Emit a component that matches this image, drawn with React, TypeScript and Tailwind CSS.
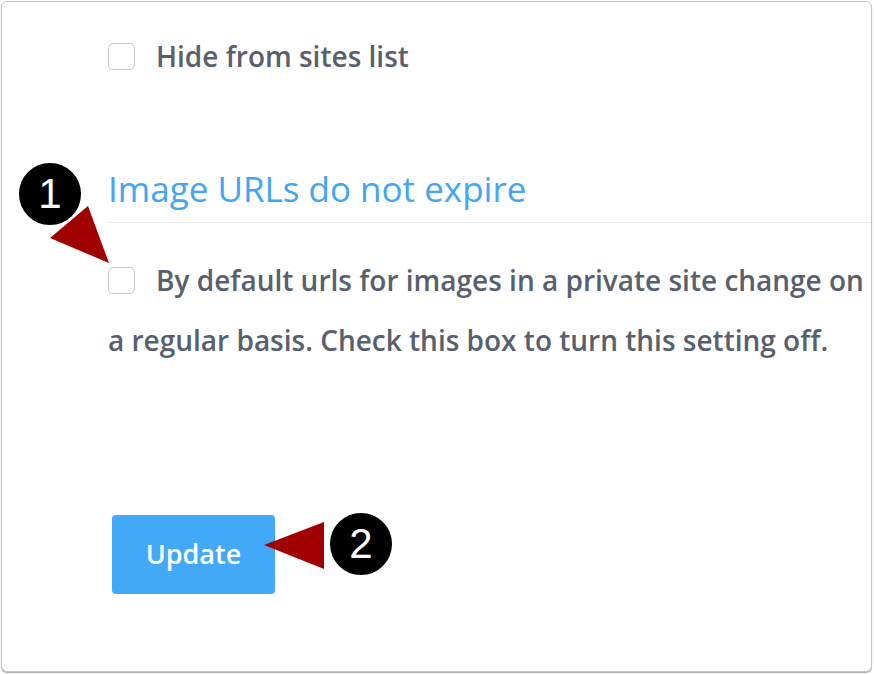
import React from 'react';

const textFont = { fontFamily: '"Open Sans", "Liberation Sans", sans-serif' };

function Box() {
    return (
        <span className="inline-block align-middle w-[27px] h-[27px] rounded-[5px] border border-[#c9c9c9] bg-white mr-[21px] relative -top-[3px]"></span>
    );
}

// numbered callout: black disc with white ring
function Callout({ n, className }: { n: string; className: string }) {
    return (
        <div
            className={`absolute w-[66px] h-[66px] rounded-full bg-black border-[2px] border-white flex items-center justify-center text-white text-[42px] leading-none ${className}`}
            style={{ fontFamily: '"Liberation Sans", Arial, sans-serif' }}
        >
            {n}
        </div>
    );
}

export default function App() {
    return (
        <div className="w-[874px] h-[674px] bg-white pt-px pl-px overflow-hidden">
            <div
                className="relative w-[871px] h-[671px] bg-white border border-[#c4c4c4] rounded-[6px] shadow-[0_1px_1px_rgba(0,0,0,0.35)]"
                style={textFont}
            >
                <div className="pl-[106px] flex flex-col items-start">
                    {/* Hide option */}
                    <div className="mt-[40px] flex items-center gap-[21px] h-[28px]">
                        <span className="inline-block w-[27px] h-[27px] rounded-[5px] border border-[#c9c9c9] bg-white"></span>
                        <span className="text-[28px] font-semibold text-[#59606d]">Hide from sites list</span>
                    </div>

                    {/* Image URLs section */}
                    <h2 className="self-stretch mt-[98px] pb-[12px] border-b border-[#ececec] text-[35px] leading-[42px] font-normal text-[#42a5f5]">
                        Image URLs do not expire
                    </h2>
                    <p className="mt-[27px] text-[28px] leading-[60px] font-semibold text-[#59606d] whitespace-nowrap">
                        <Box />
                        By default urls for images in a private site change on
                        <br />
                        a regular basis. Check this box to turn this setting off.
                    </p>

                    <button className="mt-[145px] ml-[4px] w-[163px] h-[79px] rounded-[4px] bg-[#42a8f8] text-white text-[27px] font-semibold">
                        Update
                    </button>
                </div>

                {/* annotations */}
                <svg className="absolute left-0 top-0 pointer-events-none" width="871" height="671">
                    <polygon points="48,236 86,204 107,261" fill="#a00000" />
                    <polygon points="262,543 322,520 322,567" fill="#a00000" />
                </svg>
                <Callout n="1" className="left-[15px] top-[159px]" />
                <Callout n="2" className="left-[326px] top-[509px]" />
            </div>
        </div>
    );
}
